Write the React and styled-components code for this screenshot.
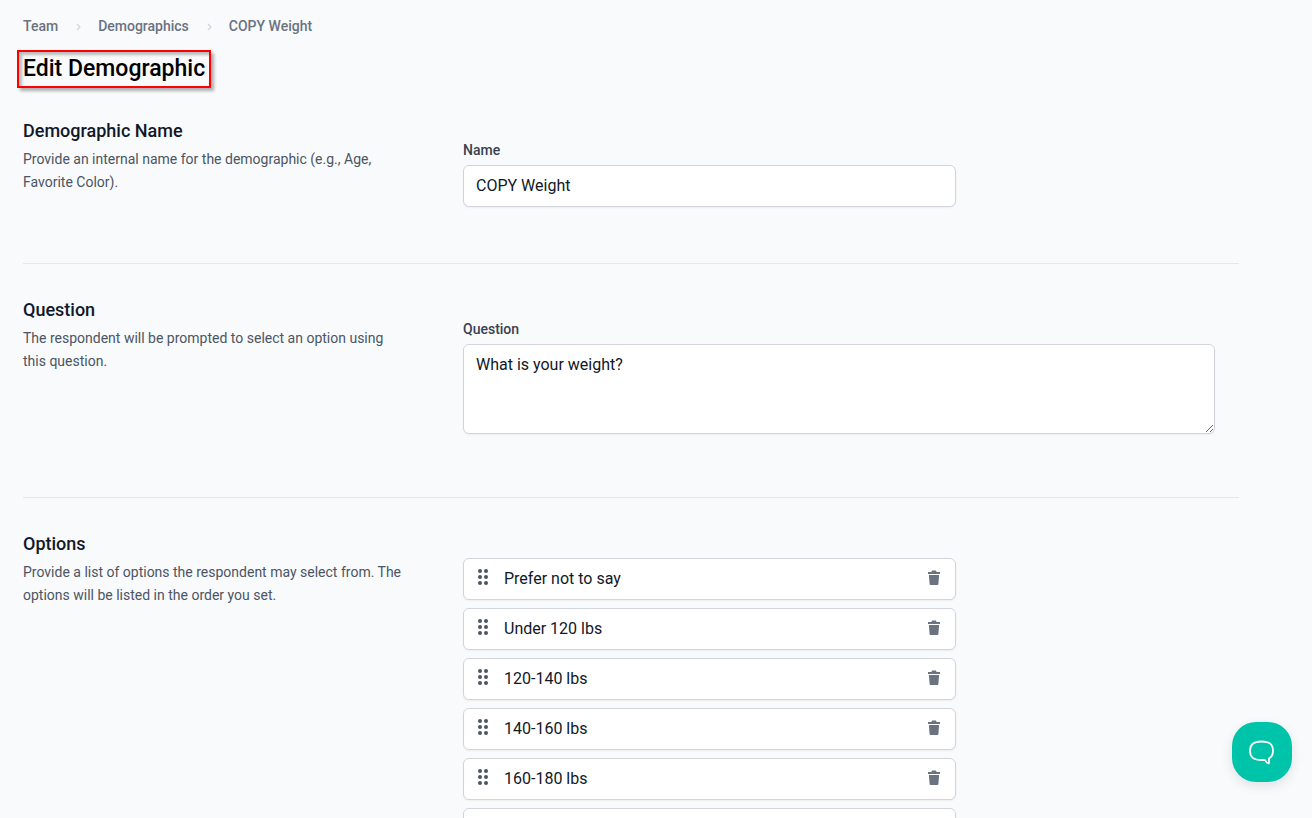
import React, { useState } from "react";
import styled, { createGlobalStyle } from "styled-components";

const GlobalStyle = createGlobalStyle`
  *, *::before, *::after { box-sizing: border-box; }
  body {
    margin: 0;
    background: #f9fafc;
    color: #111827;
    font-family: Roboto, "Liberation Sans", sans-serif;
    font-size: 16px;
    line-height: 24px;
  }
  h1, h2, p, ol, ul { margin: 0; padding: 0; }
  button, input, textarea { font: inherit; color: inherit; }
`;

const Page = styled.main`
  height: 100vh;
  overflow-y: auto;
  scrollbar-width: none;
  padding: 16px 73px 0 23px;
`;

const Crumbs = styled.ol`
  display: flex;
  align-items: center;
  gap: 16px;
  list-style: none;
  font-size: 14px;
  font-weight: 500;
  line-height: 20px;
`;

const Crumb = styled.li`
  display: flex;
  align-items: center;
  gap: 16px;
`;

const CrumbLink = styled.a`
  color: #6b7280;
  text-decoration: none;
`;

const Title = styled.h1`
  width: fit-content;
  margin: 14px 0 0 -6px;
  padding: 0 4px;
  border: 2px solid #fe0000;
  box-shadow: 3px 3px 3px rgba(0, 0, 0, 0.3), inset 3px 3px 3px rgba(0, 0, 0, 0.25);
  color: #000;
  font-size: 23px;
  font-weight: 500;
  line-height: 34px;
`;

const Sections = styled.form`
  margin-top: 29px;
`;

const Section = styled.section`
  display: grid;
  grid-template-columns: repeat(3, minmax(0, 1fr));
  column-gap: 32px;
  padding-bottom: 32px;

  & + & {
    border-top: 1px solid #e5e7eb;
    padding-top: 32px;
  }
`;

const SectionTitle = styled.h2`
  color: #111827;
  font-size: 18px;
  font-weight: 500;
  line-height: 28px;
`;

const SectionText = styled.p`
  margin-top: 3px;
  color: #4b5563;
  font-size: 14px;
  line-height: 23px;
`;

const Panel = styled.div`
  grid-column: span 2;
  display: grid;
  grid-template-columns: repeat(6, minmax(0, 1fr));
  column-gap: 24px;
  padding: ${(p) => p.$top || 23}px 24px ${(p) => p.$bottom || 24}px;
`;

const Field = styled.div`
  grid-column: span ${(p) => p.$span};
  display: flex;
  flex-direction: column;
`;

const Label = styled.label`
  margin-bottom: 5px;
  color: #374151;
  font-size: 14px;
  font-weight: 500;
  line-height: 20px;
`;

const boxed = `
  background: #fff;
  border: 1px solid #d1d5db;
  border-radius: 6px;
  box-shadow: 0 1px 2px rgba(0, 0, 0, 0.05);
`;

const TextInput = styled.input`
  ${boxed}
  width: 100%;
  height: 42px;
  padding: 7px 12px 9px;
`;

const TextArea = styled.textarea`
  ${boxed}
  display: block;
  width: 100%;
  height: 90px;
  padding: 8px 12px;
  resize: vertical;
`;

const OptionList = styled.ul`
  grid-column: span 4;
  display: flex;
  flex-direction: column;
  gap: 8px;
  list-style: none;
`;

const OptionRow = styled.li`
  ${boxed}
  display: flex;
  align-items: center;
  height: 42px;
  padding: 0 12px;
`;

const IconButton = styled.button`
  display: flex;
  flex: none;
  padding: 0 0 ${(p) => p.$lift}px;
  border: 0;
  background: none;
  color: ${(p) => p.$tone};
  cursor: pointer;
`;

const OptionInput = styled.input`
  flex: 1;
  min-width: 0;
  margin: 0 12px 0 14px;
  padding: 0;
  border: 0;
  outline: 0;
  background: none;
  line-height: 24px;
`;

const ChatButton = styled.button`
  position: fixed;
  right: 20px;
  bottom: 36px;
  display: flex;
  align-items: center;
  justify-content: center;
  width: 60px;
  height: 60px;
  padding: 0;
  border: 0;
  border-radius: 24px;
  background: #00c4aa;
  box-shadow: 0 4px 12px rgba(0, 0, 0, 0.1);
  color: #fff;
  cursor: pointer;
`;

const Chevron = () => (
  <svg width="8" height="20" viewBox="0 0 8 20" fill="none" stroke="#d1d5db" strokeWidth="1.2" aria-hidden="true">
    <path d="M3 8 6 11 3 14" />
  </svg>
);

const DragIcon = () => (
  <svg width="14" height="20" viewBox="0 0 14 20" fill="currentColor" aria-hidden="true">
    {[4, 10].map((x) => [4, 10, 16].map((y) => <circle key={x + "-" + y} cx={x} cy={y} r="2" />))}
  </svg>
);

const TrashIcon = () => (
  <svg width="18" height="20" viewBox="0 0 18 20" fill="currentColor" aria-hidden="true">
    <path d="M3 4h3.400l.7-1.400h3.800l.7 1.400H15v2H3zM3.900 7h10.200l-.7 9.100c0 .5-.4.9-.9.900H5.500c-.5 0-.9-.4-.9-.9z" />
  </svg>
);

const ChatIcon = () => (
  <svg width="28" height="28" viewBox="0 0 28 28" fill="none" stroke="currentColor" strokeWidth="1.8" strokeLinejoin="round" aria-hidden="true">
    <path d="M13.500 3.500c8 0 11.500 2.500 11.500 9.500 0 3.500-1.200 5.700-4 7.400-.2 1.200.2 3.600-.2 5.100-1.900-.6-3.100-2-4-3.700-1 .2-2.200.2-3.300.2C5.500 22 2 19.500 2 13S5.500 3.500 13.500 3.500z" />
  </svg>
);

const crumbs = ["Team", "Demographics", "COPY Weight"];
const initialOptions = ["Prefer not to say", "Under 120 lbs", "120-140 lbs", "140-160 lbs", "160-180 lbs", ""];

export default function App() {
  const [options, setOptions] = useState(initialOptions);

  const editOption = (index, value) => setOptions(options.map((o, i) => (i === index ? value : o)));
  const removeOption = (index) => setOptions(options.filter((_, i) => i !== index));

  return (
    <>
      <GlobalStyle />
      <Page>
        <nav aria-label="Breadcrumb">
          <Crumbs>
            {crumbs.map((name, i) => (
              <Crumb key={name}>
                {i > 0 && <Chevron />}
                <CrumbLink href="#">{name}</CrumbLink>
              </Crumb>
            ))}
          </Crumbs>
        </nav>
        <Title>Edit Demographic</Title>

        <Sections onSubmit={(e) => e.preventDefault()}>
          <Section>
            <div>
              <SectionTitle>Demographic Name</SectionTitle>
              <SectionText>Provide an internal name for the demographic (e.g., Age, Favorite Color).</SectionText>
            </div>
            <Panel>
              <Field $span={4}>
                <Label htmlFor="name">Name</Label>
                <TextInput id="name" defaultValue="COPY Weight" />
              </Field>
            </Panel>
          </Section>

          <Section>
            <div>
              <SectionTitle>Question</SectionTitle>
              <SectionText>The respondent will be prompted to select an option using this question.</SectionText>
            </div>
            <Panel $bottom={31}>
              <Field $span={6}>
                <Label htmlFor="question">Question</Label>
                <TextArea id="question" defaultValue="What is your weight?" />
              </Field>
            </Panel>
          </Section>

          <Section>
            <div>
              <SectionTitle>Options</SectionTitle>
              <SectionText>
                Provide a list of options the respondent may select from. The options will be listed in the order you set.
              </SectionText>
            </div>
            <Panel $top={28}>
              <OptionList>
                {options.map((option, i) => (
                  <OptionRow key={i}>
                    <IconButton type="button" $tone="#4b5563" $lift={4} aria-label="Reorder option">
                      <DragIcon />
                    </IconButton>
                    <OptionInput
                      aria-label={`Option ${i + 1}`}
                      value={option}
                      onChange={(e) => editOption(i, e.target.value)}
                    />
                    <IconButton type="button" $tone="#6b7280" $lift={2} aria-label="Delete option" onClick={() => removeOption(i)}>
                      <TrashIcon />
                    </IconButton>
                  </OptionRow>
                ))}
              </OptionList>
            </Panel>
          </Section>
        </Sections>
      </Page>
      <ChatButton type="button" aria-label="Open chat">
        <ChatIcon />
      </ChatButton>
    </>
  );
}
